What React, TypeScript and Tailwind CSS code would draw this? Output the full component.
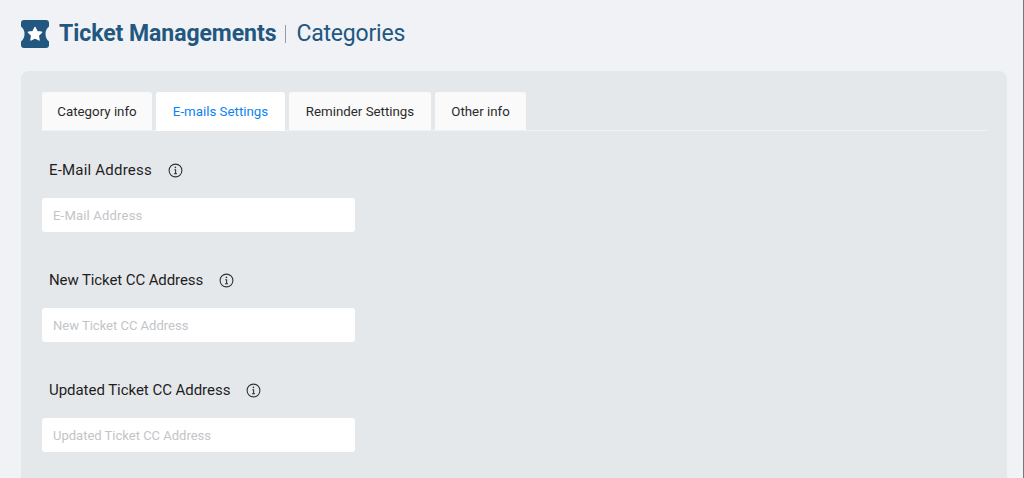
const fields = [
  { label: "E-Mail Address", track: "tracking-[0.2px]", phTrack: "placeholder:tracking-[0.2px]" },
  { label: "New Ticket CC Address", track: "tracking-[-0.1px]", phTrack: "" },
  { label: "Updated Ticket CC Address", track: "tracking-[-0.04px]", phTrack: "" },
];
const tabs = [
  { label: "Category info", w: "w-[110px]", active: false },
  { label: "E-mails Settings", w: "w-[129px]", active: true },
  { label: "Reminder Settings", w: "w-[142px]", active: false },
  { label: "Other info", w: "w-[91px]", active: false },
];

function Info() {
  return (
    <svg width="15" height="15" viewBox="0 0 15 15" fill="none" stroke="#333" strokeWidth="1.1" className="shrink-0 -translate-x-px">
      <circle cx="7.5" cy="7.5" r="6.4" />
      <path d="M6.3 6.8H7.6V10.8M6 10.8H9" />
      <circle cx="7.4" cy="4.4" r="0.8" fill="#333" stroke="none" />
    </svg>
  );
}

export default function App() {
  return (
    <div className="h-[478px] w-[1024px] overflow-hidden border-r border-r-[#77787c] bg-[#f0f2f6] font-['Roboto',sans-serif]">
      <div className="flex h-[71px] items-center pb-[5px] pl-[21px] pt-[1px]">
        <svg width="28" height="28" viewBox="0 0 28 28" className="mr-[10px] shrink-0">
          <path
            fill="#22577f"
            d="M3 0H25Q28 0 28 3V6.5Q24.5 9 24.5 14T28 21.5V25Q28 28 25 28H3Q0 28 0 25V21.5Q3.5 19 3.5 14T0 6.5V3Q0 0 3 0Z"
          />
          <path
            fill="#fff"
            stroke="#fff"
            strokeWidth="1.4"
            strokeLinejoin="round"
            d="M14 7.5L16 11.6L20.6 12.3L17.3 15.5L18.1 20L14 17.9L9.9 20L10.7 15.5L7.4 12.3L12 11.6Z"
          />
        </svg>
        <span className="text-[23px] leading-[32px] font-bold tracking-[-0.05px] text-[#22577f]">Ticket Managements</span>
        <span className="mr-[10px] ml-[9px] h-[18px] w-px bg-[#8f9ba6]" />
        <span className="text-[23px] leading-[32px] tracking-[-0.2px] text-[#22577f]">Categories</span>
      </div>
      <div className="ml-[21px] h-[420px] w-[986px] rounded-t-lg bg-[#e5e8eb] px-[21px] pt-[21px]">
        <div className="flex h-[39px] w-[945px] gap-1 border-b border-b-[#f0f2f4]">
          {tabs.map((t) => (
            <div
              key={t.label}
              className={`flex h-[39px] items-center justify-center rounded-t-[3px] text-[13.3px] ${t.w} ${
                t.active ? "bg-white text-[#0d82f2]" : "border-b border-b-[#f0f2f4] bg-[#fafafa] pt-px text-[#2a2a2a]"
              }`}
            >
              {t.label}
            </div>
          ))}
        </div>
        <div className="flex flex-col">
          {fields.map((f) => (
            <div key={f.label} className="flex h-[110px] flex-col">
              <div className={`mt-[28px] flex h-[22px] items-center gap-[17px] pl-[7px] text-[15px] text-[#1e1e1e] ${f.track}`}>
                {f.label}
                <Info />
              </div>
              <input
                placeholder={f.label}
                className={`mt-[17px] h-[34px] w-[313px] rounded-[3px] bg-white px-[11px] text-[13px] placeholder:text-[#c2c5c8] ${f.phTrack}`}
              />
            </div>
          ))}
        </div>
      </div>
    </div>
  );
}
